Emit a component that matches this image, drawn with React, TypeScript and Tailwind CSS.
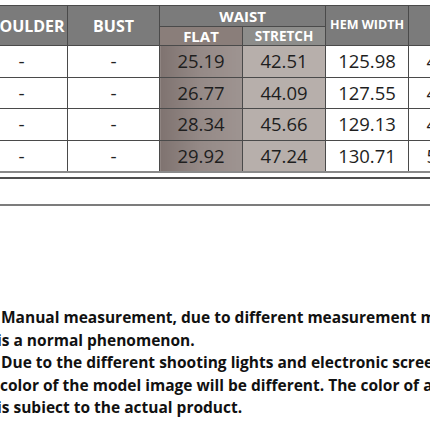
import React from "react";

const rows = [
  ["25.19", "42.51", "125.98", "42.13"],
  ["26.77", "44.09", "127.55", "43.70"],
  ["28.34", "45.66", "129.13", "45.28"],
  ["29.92", "47.24", "130.71", "51.65"],
];

const cellB = "border-[1.5px] border-[#4a4a4a]";

export default function App() {
  return (
    <div
      className="w-[430px] h-[430px] overflow-hidden bg-white relative"
      style={{ fontFamily: '"Open Sans", "Noto Sans", sans-serif' }}
    >
      <div className="pt-[5px]">
        <table className="border-collapse table-fixed ml-[-25px] w-[516px]">
          <colgroup>
            <col className="w-[92px]" />
            <col className="w-[92px]" />
            <col className="w-[83px]" />
            <col className="w-[83px]" />
            <col className="w-[83px]" />
            <col className="w-[83px]" />
          </colgroup>
          <thead>
            <tr className="h-[21px]">
              <th rowSpan={2} className={`${cellB} bg-[#7b7b7b] text-white text-[16px] font-bold p-0 whitespace-nowrap`}>
                SHOULDER
              </th>
              <th rowSpan={2} className={`${cellB} bg-[#7b7b7b] text-white text-[16px] font-bold p-0`}>
                BUST
              </th>
              <th colSpan={2} className={`${cellB} bg-[#7b7b7b] text-white text-[15px] font-bold p-0 leading-[18px]`}>
                WAIST
              </th>
              <th rowSpan={2} className={`${cellB} bg-[#7b7b7b] text-white text-[12.5px] font-bold p-0 whitespace-nowrap`}>
                HEM WIDTH
              </th>
              <th rowSpan={2} className={`${cellB} bg-[#7b7b7b] p-0`}></th>
            </tr>
            <tr className="h-[19px]">
              <th className={`${cellB} bg-[#8a7e7a] text-white text-[15px] font-bold p-0 leading-[16px]`}>
                FLAT
              </th>
              <th className={`${cellB} bg-[#8d8d8b] text-white text-[13.5px] font-bold p-0 leading-[16px]`}>
                STRETCH
              </th>
            </tr>
          </thead>
          <tbody>
            {rows.map((r, i) => (
              <tr key={i} className="h-[31.5px]">
                <td className={`${cellB} text-center text-[19px] text-[#222] p-0`}>-</td>
                <td className={`${cellB} text-center text-[19px] text-[#222] p-0`}>-</td>
                <td className={`${cellB} text-center text-[18.5px] text-[#1e1e1e] p-0 bg-linear-to-r from-[#7f7370] via-[#958a87] to-[#9e9491]`}>
                  {r[0]}
                </td>
                <td className={`${cellB} text-center text-[18.5px] text-[#1e1e1e] p-0 bg-[#b7afab]`}>
                  {r[1]}
                </td>
                <td className={`${cellB} text-center text-[18.5px] text-[#1e1e1e] p-0`}>{r[2]}</td>
                <td className={`${cellB} text-center text-[18.5px] text-[#1e1e1e] p-0`}>{r[3]}</td>
              </tr>
            ))}
          </tbody>
        </table>
        <div className="h-[2px] bg-[#8a8a8a] -mt-[1px]" />
        <div className="mt-[4px] h-[2px] bg-[#4f4f4f]" />
        <div className="mt-[25px] h-[2px] bg-[#7c7c7c]" />
      </div>
      <div className="mt-[100px] ml-[1px] text-[15.5px] font-bold text-[#111] leading-[22.5px] whitespace-nowrap">
        <div>Manual measurement, due to different measurement methods</div>
        <div className="-ml-[4px]">is a normal phenomenon.</div>
        <div>Due to the different shooting lights and electronic screens</div>
        <div className="-ml-[1px]">color of the model image will be different. The color of actual</div>
        <div className="-ml-[4px]">is subiect to the actual product.</div>
      </div>
    </div>
  );
}
